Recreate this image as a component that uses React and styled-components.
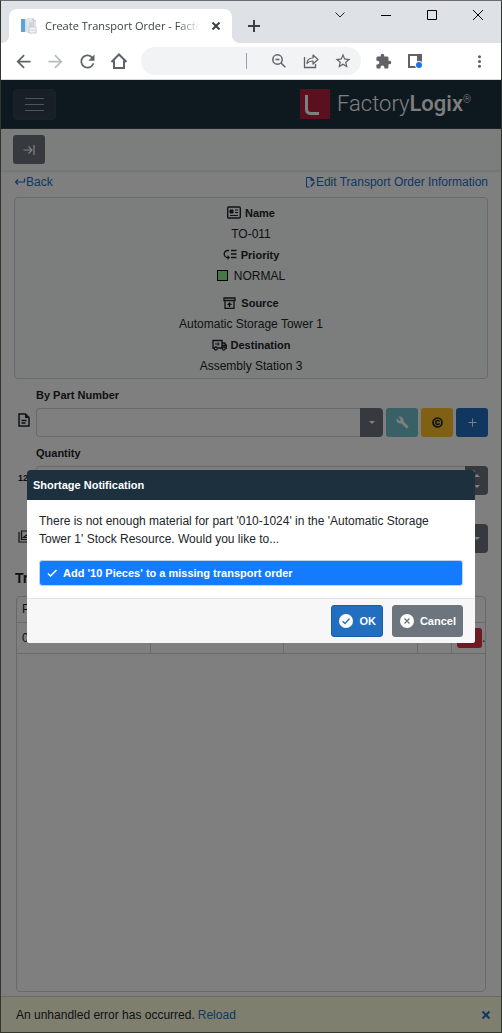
import React, { useState } from "react";
import styled, { createGlobalStyle } from "styled-components";
import {
  MdArrowBack,
  MdArrowForward,
  MdRefresh,
  MdStarBorder,
  MdExtension,
  MdMoreVert,
  MdBuild,
} from "react-icons/md";

const GlobalStyle = createGlobalStyle`
  * {
    box-sizing: border-box;
  }
  body {
    margin: 0;
    background-color: #33362c;
    color: #212529;
    font-family: "Liberation Sans", Arial, sans-serif;
    font-size: 12px;
    line-height: 18px;
  }
  button, input {
    font: inherit;
  }
  svg {
    display: block;
    flex: none;
  }
`;

const Window = styled.div`
  display: flex;
  flex-direction: column;
  min-height: 100vh;
  border: 1px solid #33362c;
  border-top-color: #6b6c70;
`;

/* browser frame */
const TitleBar = styled.div`
  display: flex;
  height: 42px;
  padding-left: 8px;
  background-color: #dee1e6;
`;
const Tab = styled.div`
  position: relative;
  display: flex;
  align-items: center;
  gap: 8px;
  width: 223px;
  height: 34px;
  margin-top: 8px;
  padding: 0 8px 0 12px;
  border-radius: 8px 8px 0 0;
  background-color: #fff;

  &::before,
  &::after {
    content: "";
    position: absolute;
    bottom: 0;
    width: 8px;
    height: 8px;
  }
  &::before {
    left: -8px;
    background: radial-gradient(circle at 0 0, #dee1e6 8px, #fff 8px);
  }
  &::after {
    right: -8px;
    background: radial-gradient(circle at 100% 0, #dee1e6 8px, #fff 8px);
  }
`;
const TabTitle = styled.span`
  flex: 1;
  overflow: hidden;
  white-space: nowrap;
  color: #3c4043;
  font-family: "Open Sans", "Noto Sans", sans-serif;
  font-size: 11px;
  mask-image: linear-gradient(to right, #000 85%, transparent);
`;
const FrameButton = styled.button`
  display: flex;
  align-items: center;
  justify-content: center;
  flex: none;
  width: ${(props) => props.$width || 32}px;
  height: ${(props) => props.$height || 28}px;
  padding: 0;
  border: none;
  background: none;
  color: ${(props) => props.$color || "#5f6368"};
`;
const NewTab = styled.div`
  display: flex;
  align-items: center;
  flex: 1;
  padding: 8px 0 0 6px;
`;
const AddressRow = styled.div`
  display: flex;
  align-items: center;
  height: 37px;
  padding: 0 6px;
  border-bottom: 1px solid #d5d7da;
  background-color: #fff;
`;
const Omnibox = styled.div`
  display: flex;
  align-items: center;
  flex: 1;
  min-width: 0;
  height: 28px;
  margin: 0 6px;
  padding: 0 2px 0 14px;
  border-radius: 14px;
  background-color: #f1f3f4;
`;
const AddressInput = styled.input`
  flex: 1;
  min-width: 0;
  height: 16px;
  margin-right: 16px;
  border: none;
  border-right: 1px solid #9aa0a6;
  outline: none;
  background: none;
`;
const Gap = styled.span`
  width: 32px;
`;

/* application page */
const Page = styled.div`
  position: relative;
  display: flex;
  flex-direction: column;
  flex: 1;
  background-color: #fff;
`;
const NavBar = styled.header`
  display: flex;
  align-items: center;
  justify-content: space-between;
  height: 49px;
  padding: 0 30px 0 12px;
  border-bottom: 1px solid #3c4a54;
  background-color: #1c303e;
`;
const MenuButton = styled.button`
  display: flex;
  align-items: center;
  justify-content: center;
  width: 43px;
  height: 31px;
  border: 1px solid #334552;
  border-radius: 4px;
  background-color: #333f4d;
  color: #a4a8b0;
`;
const Brand = styled.div`
  display: flex;
  align-items: center;
  gap: 7px;
  color: #fff;
  font-family: Roboto, sans-serif;
  font-size: 22px;
  font-weight: 300;
  line-height: 30px;

  b {
    font-weight: 500;
  }
  sup {
    font-size: 10px;
    line-height: 10px;
  }
`;
const SubBar = styled.div`
  display: flex;
  align-items: center;
  height: 42px;
  padding: 0 12px;
  border-bottom: 1px solid #e6e8e8;
  background-color: #f8fafa;
  box-shadow: 0 1px 3px rgba(0, 0, 0, 0.1);
`;
const Content = styled.main`
  display: flex;
  flex-direction: column;
  flex: 1;
  padding: 2px 13px 4px;
`;
const LinkRow = styled.div`
  display: flex;
  justify-content: space-between;
  margin-bottom: 6px;
`;
const TextLink = styled.a`
  display: flex;
  align-items: center;
  color: #226fc7;
  text-decoration: none;
`;
const InfoCard = styled.section`
  padding: 4px 0 2px;
  border: 1px solid #d3d5d6;
  border-radius: 4px;
  background-color: #f8fafa;
`;
const InfoLine = styled.div`
  display: flex;
  align-items: center;
  justify-content: center;
  gap: 4px;
  height: 21px;
  margin-top: ${(props) => (props.$apart ? 6 : 0)}px;
  color: #212529;
  font-size: ${(props) => (props.$label ? 11 : 12)}px;
  font-weight: ${(props) => (props.$label ? "bold" : "normal")};
`;
const Swatch = styled.span`
  width: 11px;
  height: 11px;
  margin-right: 2px;
  border: 1px solid #000;
  background-color: #90ee90;
`;
const Form = styled.form`
  margin-top: 7px;
`;
const Field = styled.div`
  display: grid;
  grid-template-columns: 22px 1fr;
  grid-template-rows: 22px 29px;
  height: 58px;
`;
const FieldLabel = styled.label`
  grid-column: 2;
  grid-row: 1;
  font-size: 11px;
  font-weight: bold;
`;
const FieldIcon = styled.span`
  grid-row: 2;
  display: flex;
  align-items: center;
  height: 24px;
  padding-left: 4px;
  overflow: hidden;
  font-size: 9px;
  font-weight: bold;
`;
const FieldRow = styled.div`
  grid-row: 2;
  display: flex;
`;
const TextInput = styled.input`
  flex: 1;
  min-width: 0;
  border: 1px solid #ced4da;
  border-right: none;
  border-radius: 4px 0 0 4px;
  outline: none;
  background-color: #fff;
`;
const SideButton = styled.button`
  display: flex;
  flex-direction: column;
  align-items: center;
  justify-content: center;
  gap: 8px;
  width: 23px;
  padding: 0;
  border: none;
  border-radius: 0 4px 4px 0;
  background-color: #6c757d;
  color: #fff;
`;
const ToolButton = styled.button`
  display: flex;
  align-items: center;
  justify-content: center;
  width: 32px;
  height: 29px;
  margin-left: ${(props) => (props.$first ? 0 : 3)}px;
  padding: 0;
  border: none;
  border-radius: 3px;
  background-color: ${(props) => props.$bg};
  color: ${(props) => props.$color || "#fff"};
`;
const SectionTitle = styled.h2`
  margin: 8px 0;
  padding: 0 1px;
  font-size: 14px;
  line-height: 20px;
`;
const GridPanel = styled.div`
  flex: 1;
  min-height: 200px;
  margin: 0 2px;
  border: 1px solid #ced4da;
  border-radius: 4px;
`;
const Grid = styled.table`
  width: 100%;
  border-collapse: collapse;
  table-layout: fixed;

  th,
  td {
    padding: 0 5px;
    border-bottom: 1px solid #d3d5d6;
    font-weight: normal;
    text-align: left;
    white-space: nowrap;
  }
  th {
    height: 25px;
  }
  td {
    height: 31px;
  }
  td + td {
    border-left: 1px solid #d3d5d6;
  }
`;
const NarrowCol = styled.col`
  width: 34px;
`;
const RowActions = styled.div`
  display: flex;
  align-items: center;
  overflow: hidden;
  margin-right: -5px;
`;
const DeleteButton = styled.button`
  flex: none;
  width: 25px;
  height: 20px;
  border: none;
  border-radius: 3px;
  background-color: #dc3545;
`;
const ErrorBar = styled.footer`
  display: flex;
  align-items: center;
  gap: 3px;
  height: 36px;
  padding: 0 10px 0 15px;
  border-top: 1px solid #d8d8c0;
  background-color: #ffffe0;
`;
const CloseButton = styled.button`
  margin-left: auto;
  padding: 0;
  border: none;
  background: none;
  color: #226fc7;
`;

/* modal dialog */
const Backdrop = styled.div`
  position: absolute;
  inset: 0;
  display: flex;
  align-items: center;
  justify-content: center;
  padding: 0 26px;
  background-color: rgba(0, 0, 0, 0.5);
`;
const Dialog = styled.div`
  flex: 1;
  max-width: 500px;
  overflow: hidden;
  border-radius: 3px;
  background-color: #fff;
`;
const DialogTitle = styled.h1`
  margin: 0;
  padding: 6px;
  background-color: #1c303e;
  color: #fff;
  font-size: 11px;
  line-height: 18px;
`;
const DialogBody = styled.div`
  padding: 12px;
`;
const Message = styled.p`
  margin: 0 0 12px;
`;
const Option = styled.button`
  display: flex;
  align-items: center;
  gap: 5px;
  width: 100%;
  height: 26px;
  padding: 0 7px;
  border: 1px solid #c3d3ea;
  border-radius: 3px;
  background-color: ${(props) => (props.$selected ? "#147bff" : "#fff")};
  color: ${(props) => (props.$selected ? "#fff" : "#212529")};
  font-size: 11px;
  font-weight: bold;
`;
const DialogFooter = styled.div`
  display: flex;
  justify-content: flex-end;
  gap: 9px;
  padding: 6px 12px;
  border-top: 1px solid #dee2e6;
  background-color: #f7f7f7;
`;
const DialogButton = styled.button`
  display: flex;
  align-items: center;
  gap: 5px;
  height: 32px;
  padding: 0 6px;
  border: 1px solid ${(props) => (props.$primary ? "#1b5ca6" : "#6c757d")};
  border-radius: 3px;
  background-color: ${(props) => (props.$primary ? "#226fc1" : "#6c757d")};
  color: #fff;
  font-size: 11px;
  font-weight: bold;
`;

function Stroke({ w = 16, h = 16, sw = 1, d, children }) {
  return (
    <svg
      width={w}
      height={h}
      viewBox={`0 0 ${w} ${h}`}
      fill="none"
      stroke="currentColor"
      strokeWidth={sw}
    >
      {d && <path d={d} />}
      {children}
    </svg>
  );
}

function Caret({ up }) {
  return (
    <svg width="6" height="3" viewBox="0 0 6 3" fill="currentColor">
      <path d={up ? "M0 3 3 0l3 3z" : "M0 0h6L3 3z"} />
    </svg>
  );
}

function BrowserFrame() {
  return (
    <>
      <TitleBar>
        <Tab>
          <svg width="16" height="16" viewBox="0 0 16 16">
            <path d="M0 1h4v13H0z" fill="#5fa3cf" />
            <path d="M4 1h2v13H4z" fill="#cfe3ef" />
            <path d="M6 0h6l3 3v12H6z" fill="#e4e6ea" />
            <path d="M12 0v3h3M8 5h5M8 7h5M8 9h5" stroke="#bfc4ca" fill="none" />
            <path d="M8 9h7v6H8z" fill="#f5f6f7" stroke="#c5cad4" />
            <path d="M9 12h5" stroke="#c5cad4" />
          </svg>
          <TabTitle>Create Transport Order - FactoryLogix</TabTitle>
          <FrameButton $width={16} $height={16} $color="#3c4043" aria-label="Close tab">
            <Stroke w={8} h={8} sw={2} d="M0.5 0.5l7 7M7.5 0.5l-7 7" />
          </FrameButton>
        </Tab>
        <NewTab>
          <FrameButton $color="#3c4043" aria-label="New tab">
            <Stroke w={12} h={12} sw={2} d="M6 0v12M0 6h12" />
          </FrameButton>
        </NewTab>
        <FrameButton $width={46} $color="#222" aria-label="Search tabs">
          <Stroke w={10} h={6} d="M0.5 0.5 5 5 9.5 0.5" />
        </FrameButton>
        <FrameButton $width={46} $color="#000" aria-label="Minimize">
          <Stroke w={10} h={1} d="M0 0.5h10" />
        </FrameButton>
        <FrameButton $width={46} $color="#000" aria-label="Maximize">
          <Stroke w={10} h={10} d="M0.5 0.5h9v9h-9z" />
        </FrameButton>
        <FrameButton $width={46} $color="#000" aria-label="Close">
          <Stroke w={10} h={10} d="M0 0l10 10M10 0 0 10" />
        </FrameButton>
      </TitleBar>
      <AddressRow>
        <FrameButton aria-label="Back">
          <MdArrowBack size={21} />
        </FrameButton>
        <FrameButton $color="#babcbe" aria-label="Forward">
          <MdArrowForward size={21} />
        </FrameButton>
        <FrameButton aria-label="Reload">
          <MdRefresh size={21} />
        </FrameButton>
        <FrameButton aria-label="Home">
          <Stroke w={16} h={16} sw={2} d="M0.5 9 8 1.5 15.5 9M3 7.5V15h10V7.5" />
        </FrameButton>
        <Omnibox>
          <AddressInput aria-label="Address" />
          <FrameButton aria-label="Zoom">
            <Stroke w={14} h={14} sw={1.5}>
              <circle cx="5.500" cy="5.500" r="4.700" />
              <path d="M3.500 5.500h4M9 9l4.300 4.300" />
            </Stroke>
          </FrameButton>
          <FrameButton aria-label="Share">
            <Stroke w={16} h={16}>
              <path d="M1.500 4v10.500h11V11" strokeWidth="1.300" />
              <path
                d="M4 10.500c0-4 2.500-5.500 6-5.500V2l5 4.500L10 11V8C7.500 8 5.500 8.500 4 10.500z"
                strokeWidth="1.200"
                strokeLinejoin="round"
              />
            </Stroke>
          </FrameButton>
          <FrameButton aria-label="Bookmark">
            <MdStarBorder size={18} />
          </FrameButton>
        </Omnibox>
        <FrameButton aria-label="Extensions">
          <MdExtension size={17} />
        </FrameButton>
        <FrameButton aria-label="Side panel">
          <svg width="15" height="15" viewBox="0 0 15 15">
            <path d="M1 1h12v12H1z" fill="#fff" stroke="#5f6368" strokeWidth="2" />
            <path d="M9 1h5v8H9z" fill="#5f6368" />
            <circle cx="11" cy="11" r="4" fill="#fff" />
            <circle cx="11" cy="11" r="3" fill="#1a73e8" />
          </svg>
        </FrameButton>
        <Gap />
        <FrameButton aria-label="Browser menu">
          <MdMoreVert size={19} />
        </FrameButton>
      </AddressRow>
    </>
  );
}

function OrderInfo() {
  return (
    <InfoCard>
      <InfoLine $label>
        <Stroke w={14} h={13}>
          <rect x="0.7" y="1" width="12.6" height="11" rx="1" strokeWidth="1.4" />
          <path d="M3 4h3v3H3z" fill="currentColor" />
          <path d="M3 9.5h8M8 4h3M8 6.5h3" strokeWidth="1.2" />
        </Stroke>
        Name
      </InfoLine>
      <InfoLine>TO-011</InfoLine>
      <InfoLine $label>
        <Stroke w={14} h={11}>
          <path
            d="M6 1.5H5A3.5 3.5 0 0 0 4.500 8.5H5M8 1.500H13.500M8 5H13.500M8 8.500H13.500"
            strokeWidth="1.4"
          />
          <path d="M4.5 6 7 8.5 4.5 11z" fill="currentColor" stroke="none" />
        </Stroke>
        Priority
      </InfoLine>
      <InfoLine>
        <Swatch />
        NORMAL
      </InfoLine>
      <InfoLine $label $apart>
        <Stroke w={14} h={12}>
          <path d="M1 1h11v2.500H1zM2 3.500v8h9v-8" strokeWidth="1.300" />
          <path d="M6.500 10V7" strokeWidth="1.500" />
          <path d="M4 8l2.500-3L9 8z" fill="currentColor" stroke="none" />
        </Stroke>
        Source
      </InfoLine>
      <InfoLine>Automatic Storage Tower 1</InfoLine>
      <InfoLine $label>
        <Stroke w={15} h={12}>
          <path
            d="M2 9H1V1.500h9V9H6M10 4h2.500L14.300 6.500V9H14M10 6.500h4"
            strokeWidth="1.4"
          />
          <path d="M3 5h4M5.500 3.300 7.300 5 5.500 6.700" />
          <circle cx="3.800" cy="9.500" r="1.500" strokeWidth="1.3" />
          <circle cx="11.800" cy="9.500" r="1.500" strokeWidth="1.3" />
        </Stroke>
        Destination
      </InfoLine>
      <InfoLine>Assembly Station 3</InfoLine>
    </InfoCard>
  );
}

function OrderForm() {
  return (
    <Form>
      <Field>
        <FieldLabel htmlFor="part">By Part Number</FieldLabel>
        <FieldIcon>
          <Stroke w={12} h={14} sw={1.5}>
            <path d="M1 1h6.500L11 4.500V13H1zM3.500 7.500h5M3.500 10h4" />
            <path d="M7 1v4h4z" fill="currentColor" stroke="none" />
          </Stroke>
        </FieldIcon>
        <FieldRow>
          <TextInput id="part" />
          <SideButton type="button" aria-label="Show parts">
            <Caret />
          </SideButton>
          <ToolButton type="button" $bg="#72c1cb" aria-label="Tools">
            <MdBuild size={13} />
          </ToolButton>
          <ToolButton
            type="button"
            $bg="#ffc02b"
            $color="#212529"
            aria-label="Consumables"
          >
            <Stroke w={11} h={11}>
              <circle cx="5.500" cy="5.500" r="4.500" strokeWidth="1.700" />
              <path d="M7.500 4.700C7 3 3.700 3 3.700 5.500S7 8 7.500 6.300" strokeWidth="1.700" />
            </Stroke>
          </ToolButton>
          <ToolButton type="button" $bg="#226fc1" aria-label="Add">
            <Stroke w={9} h={9} d="M4.5 0.5v8M0.5 4.5h8" />
          </ToolButton>
        </FieldRow>
      </Field>
      <Field>
        <FieldLabel htmlFor="quantity">Quantity</FieldLabel>
        <FieldIcon>123</FieldIcon>
        <FieldRow>
          <TextInput id="quantity" />
          <SideButton type="button" aria-label="Change quantity">
            <Caret up />
            <Caret />
          </SideButton>
        </FieldRow>
      </Field>
      <Field>
        <FieldIcon>
          <Stroke w={14} h={13}>
            <path d="M1 2v10h10" strokeWidth="1.200" />
            <path d="M3.500 1H13v8.500H3.500zM5.500 7.500h5.500L8.500 5z" strokeWidth="1.200" />
          </Stroke>
        </FieldIcon>
        <FieldRow>
          <TextInput aria-label="Stock resource" />
          <SideButton type="button" aria-label="Show resources">
            <Caret />
          </SideButton>
        </FieldRow>
      </Field>
    </Form>
  );
}

function OrderItems() {
  return (
    <>
      <SectionTitle>Transport Order Items</SectionTitle>
      <GridPanel>
        <Grid>
          <colgroup>
            <col />
            <col />
            <col />
            <NarrowCol />
            <NarrowCol />
          </colgroup>
          <thead>
            <tr>
              <th>Part Number</th>
              <th />
              <th />
              <th />
              <th />
            </tr>
          </thead>
          <tbody>
            <tr>
              <td>010-1024</td>
              <td />
              <td />
              <td />
              <td>
                <RowActions>
                  <DeleteButton aria-label="Delete" />…
                </RowActions>
              </td>
            </tr>
          </tbody>
        </Grid>
      </GridPanel>
    </>
  );
}

function ShortageDialog() {
  const [selected, setSelected] = useState(true);

  return (
    <Backdrop>
      <Dialog role="dialog" aria-labelledby="shortage-title">
        <DialogTitle id="shortage-title">Shortage Notification</DialogTitle>
        <DialogBody>
          <Message>
            There is not enough material for part '010-1024' in the 'Automatic
            Storage Tower 1' Stock Resource. Would you like to...
          </Message>
          <Option
            $selected={selected}
            aria-pressed={selected}
            onClick={() => setSelected(!selected)}
          >
            <Stroke w={11} h={8} sw={1.5} d="M1 4.5 3.5 7l6-6" />
            Add '10 Pieces' to a missing transport order
          </Option>
        </DialogBody>
        <DialogFooter>
          <DialogButton $primary>
            <svg width="16" height="16" viewBox="0 0 16 16">
              <circle cx="8" cy="8" r="7" fill="#fff" />
              <path d="M4.5 8.3 7 10.5l4.500-5" fill="none" stroke="#226fc1" strokeWidth="1.3" />
            </svg>
            OK
          </DialogButton>
          <DialogButton>
            <svg width="16" height="16" viewBox="0 0 16 16">
              <circle cx="8" cy="8" r="7" fill="#fff" />
              <path d="M5.5 5.5l5 5M10.5 5.5l-5 5" stroke="#6c757d" strokeWidth="1.3" />
            </svg>
            Cancel
          </DialogButton>
        </DialogFooter>
      </Dialog>
    </Backdrop>
  );
}

function App() {
  return (
    <Window>
      <GlobalStyle />
      <BrowserFrame />
      <Page>
        <NavBar>
          <MenuButton aria-label="Menu">
            <Stroke w={19} h={15} d="M0 1.5h19M0 7.5h19M0 13.5h19" />
          </MenuButton>
          <Brand>
            <svg width="30" height="30" viewBox="0 0 30 30">
              <path d="M0 0h30v30H0z" fill="#b5203f" />
              <path
                d="M6.500 6v14q0 4.500 4.500 4.500h8"
                fill="none"
                stroke="#fff"
                strokeWidth="3"
              />
            </svg>
            <span>
              Factory<b>Logix</b>
              <sup>®</sup>
            </span>
          </Brand>
        </NavBar>
        <SubBar>
          <ToolButton $first $bg="#6c757d" aria-label="Expand panel">
            <Stroke w={12} h={10} sw={1.2} d="M0.5 5h8.500M5.500 1.500 9 5 5.500 8.500M11 0v10" />
          </ToolButton>
        </SubBar>
        <Content>
          <LinkRow>
            <TextLink href="#back">
              <Stroke w={12} h={8} sw={1.2} d="M10.5 0.5v3.5H1.500M4 1.500 1.500 4 4 6.500" />
              Back
            </TextLink>
            <TextLink href="#edit">
              <Stroke w={11} h={12}>
                <path d="M4.500 11H1.5V1.5H6L8.500 4" />
                <path d="M6 1.5v3h3z" fill="currentColor" />
                <path d="M9.500 6 6 10.500" strokeWidth="1.5" />
              </Stroke>
              Edit Transport Order Information
            </TextLink>
          </LinkRow>
          <OrderInfo />
          <OrderForm />
          <OrderItems />
        </Content>
        <ErrorBar>
          An unhandled error has occurred.
          <TextLink href="#reload">Reload</TextLink>
          <CloseButton aria-label="Dismiss">
            <Stroke w={10} h={10} sw={2} d="M1.5 1.5l7 7M8.5 1.5l-7 7" />
          </CloseButton>
        </ErrorBar>
        <ShortageDialog />
      </Page>
    </Window>
  );
}

export default App;
